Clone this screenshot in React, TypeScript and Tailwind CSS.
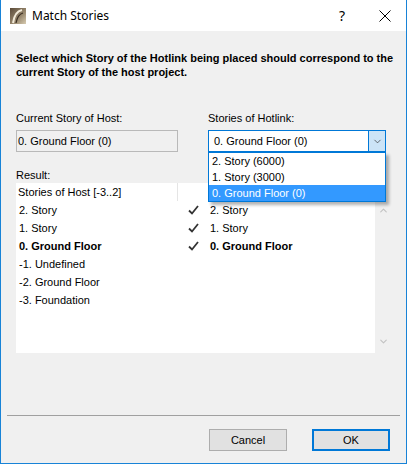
import { ChevronDown, ChevronUp } from "lucide-react"

// Linhas da lista de resultado
const linhas = [
  { host: "2. Story", link: "2. Story", ok: true },
  { host: "1. Story", link: "1. Story", ok: true },
  { host: "0. Ground Floor", link: "0. Ground Floor", ok: true, bold: true },
  { host: "-1. Undefined", link: "", ok: false },
  { host: "-2. Ground Floor", link: "", ok: false },
  { host: "-3. Foundation", link: "", ok: false },
]

const opcoes = ["2. Story (6000)", "1. Story (3000)", "0. Ground Floor (0)"]

function Logo() {
  return (
    <svg width="16" height="16" viewBox="0 0 16 16">
      <defs>
        <linearGradient id="lg" x1="0" y1="0" x2="1" y2="1">
          <stop offset="0" stopColor="#5a4a38" />
          <stop offset="0.6" stopColor="#9a8a70" />
          <stop offset="1" stopColor="#d8ccb2" />
        </linearGradient>
      </defs>
      <rect width="16" height="16" fill="url(#lg)" />
      <path d="M3 15 C4 8 7 3 12 2" stroke="#f2ead8" strokeWidth="2" fill="none" />
      <path d="M6 15 C7 10 9 6 13 5" stroke="#3a2e22" strokeWidth="1.2" fill="none" />
    </svg>
  )
}

function Tick() {
  return (
    <svg width="11" height="10" viewBox="0 0 11 10">
      <path d="M1 5.5 L4 8.5 L10 1" stroke="#333" strokeWidth="1.8" fill="none" />
    </svg>
  )
}

export default function App() {
  return (
    <div
      className="w-[407px] h-[464px] flex flex-col border border-t-0 border-[#1883d7] bg-[#f0f0f0] text-[11px] text-black"
      style={{ fontFamily: '"Liberation Sans", Arial, sans-serif' }}
    >
      {/* TITLE BAR */}
      <div className="h-[31px] bg-white flex items-center shrink-0">
        <div className="ml-[9px]"><Logo /></div>
        <span className="ml-[6px] text-[12px]" style={{ fontFamily: '"Noto Sans", sans-serif' }}>Match Stories</span>
        <span className="ml-auto text-[14px] mr-[34px]" style={{ fontFamily: '"Noto Sans", sans-serif' }}>?</span>
        <svg width="12" height="12" viewBox="0 0 12 12" className="mr-[15px]">
          <path d="M0.5 0.5 L11.5 11.5 M11.5 0.5 L0.5 11.5" stroke="#000" strokeWidth="1" />
        </svg>
      </div>

      {/* CONTEÚDO */}
      <div className="flex-1 flex flex-col px-[15px] pt-[20px]">
        <p className="font-bold text-[11px] leading-[14px] -mr-[4px]">
          Select which Story of the Hotlink being placed should correspond to the current Story of the host project.
        </p>

        <div className="flex mt-[32px]">
          <div className="w-[162px]">
            <div className="leading-[14px]">Current Story of Host:</div>
            <div className="mt-[5px] h-[22px] border border-[#b9b9b9] flex items-center pl-[1px]">
              0. Ground Floor (0)
            </div>
          </div>

          <div className="ml-[30px] w-[178px] relative">
            <div className="leading-[14px]">Stories of Hotlink:</div>
            <div className="mt-[5px] h-[22px] border border-[#0078d7] bg-white flex items-center">
              <span className="pl-[5px] flex-1">0. Ground Floor (0)</span>
              <div className="w-[17px] h-full bg-[#cce4f7] border-l border-[#0078d7] flex items-center justify-center">
                <ChevronDown size={11} strokeWidth={1.5} className="text-[#333]" />
              </div>
            </div>

            {/* LISTA ABERTA DO COMBO */}
            <div className="absolute left-0 top-[41px] w-[178px] bg-white border border-[#0078d7] shadow-[3px_3px_3px_rgba(0,0,0,0.3)] z-10">
              {opcoes.map((o, i) => (
                <div
                  key={o}
                  className={`h-[16px] leading-[16px] pl-[3px] ${i === 2 ? "bg-[#3399ff] text-white" : ""}`}
                >
                  {o}
                </div>
              ))}
            </div>
          </div>
        </div>

        <div className="mt-[16px] leading-[14px]">Result:</div>

        {/* LISTA DE RESULTADO */}
        <div className="mt-[1px] flex w-[375px]">
          <div className="w-[359px] h-[170px] bg-white">
            <div className="h-[18px] flex items-center">
              <span className="w-[161px] pl-[2px]">Stories of Host [-3..2]</span>
              <span className="w-px h-full bg-[#e5e5e5]" />
            </div>
            {linhas.map((l) => (
              <div key={l.host} className={`h-[18px] flex items-center ${l.bold ? "font-bold" : ""}`}>
                <span className="w-[171px] pl-[3px]">{l.host}</span>
                <span className="w-[12px] flex justify-center">{l.ok && <Tick />}</span>
                <span className="ml-[11px]">{l.link}</span>
              </div>
            ))}
          </div>
          <div className="w-[16px] h-[170px] flex flex-col items-center justify-between pt-[22px] pb-[6px]">
            <ChevronUp size={11} strokeWidth={2.5} className="text-[#c2c2c2]" />
            <ChevronDown size={11} strokeWidth={2.5} className="text-[#c2c2c2]" />
          </div>
        </div>

        <div className="flex-1" />
        <div className="-mx-[9px] h-px bg-[#a0a0a0]" />
        <div className="flex justify-end gap-[25px] mt-[13px] mb-[12px] pr-[1px]">
          <button className="w-[78px] h-[22px] border border-[#adadad] bg-[#e1e1e1]">Cancel</button>
          <button className="w-[78px] h-[22px] border-2 border-[#0078d7] bg-[#e1e1e1]">OK</button>
        </div>
      </div>
    </div>
  )
}
